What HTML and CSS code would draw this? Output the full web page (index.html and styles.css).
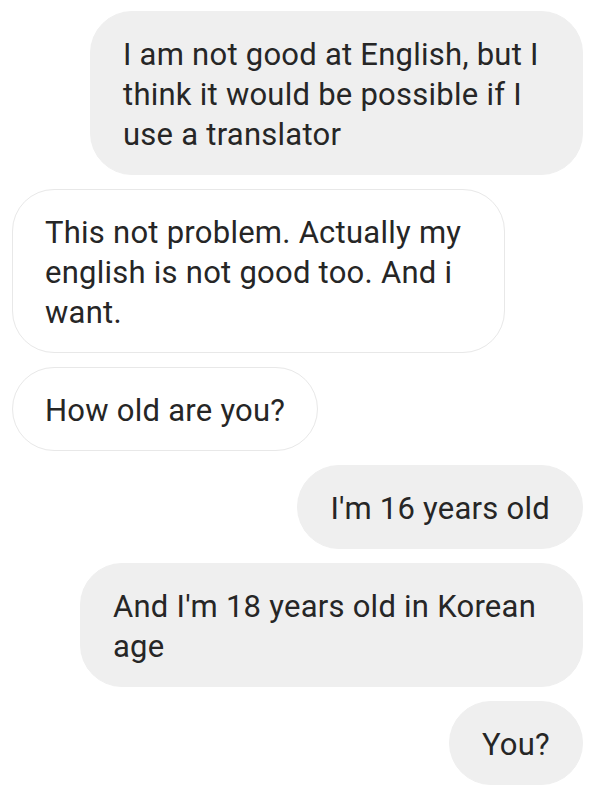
FILE: index.html
```html
<!DOCTYPE html>
<html>
<head>
<meta charset="utf-8">
<link rel="stylesheet" href="styles.css">
</head>
<body>
<div class="thread">
  <div class="msg sent">I am not good at English, but I think it would be possible if I use a translator</div>
  <div class="msg recv">This not problem. Actually my english is not good too. And i want.</div>
  <div class="msg recv">How old are you?</div>
  <div class="msg sent">I'm 16 years old</div>
  <div class="msg sent wide">And I'm 18 years old in Korean age</div>
  <div class="msg sent">You?</div>
</div>
</body>
</html>
```
FILE: styles.css
```css
html, body {
  margin: 0;
  padding: 0;
  background: #ffffff;
}
body {
  font-family: Roboto, "Liberation Sans", sans-serif;
  color: #262626;
}
.thread {
  display: flex;
  flex-direction: column;
  gap: 14px;
  padding: 11px 28px 12px 12px;
}
.msg {
  box-sizing: border-box;
  max-width: 493px;
  padding: 22.5px 32px 19.5px;
  font-size: 31px;
  letter-spacing: 0.25px;
  line-height: 40px;
  border-radius: 42px;
}
.sent {
  align-self: flex-end;
  background: #efefef;
  border: 1px solid #efefef;
}
.recv {
  align-self: flex-start;
  background: #ffffff;
  border: 1px solid #e8e8e8;
}
.wide {
  max-width: 503px;
}
```
